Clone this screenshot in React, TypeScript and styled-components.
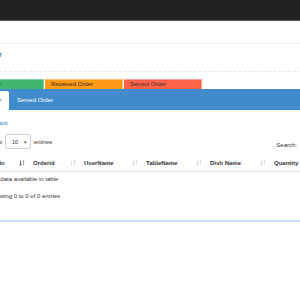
import React from "react";
import styled, { createGlobalStyle } from "styled-components";

const GlobalStyle = createGlobalStyle`
  html, body {
    margin: 0;
    padding: 0;
    background: #fff;
    overflow: hidden;
  }
  body {
    font-family: "Liberation Sans", Arial, sans-serif;
    font-size: 6px;
    color: #333;
  }
`;

type StatusType = "new" | "received" | "served";

const statusColors: Record<StatusType, { bg: string; border: string }> = {
  new: { bg: "#3fb56f", border: "#7fd0a0" },
  received: { bg: "#fd9a17", border: "#ffc06c" },
  served: { bg: "#fe6349", border: "#ffa595" },
};

const columns = [
  { title: "S.No", width: 42, active: true },
  { title: "Orderid", width: 51 },
  { title: "UserName", width: 62 },
  { title: "TableName", width: 64 },
  { title: "Dish Name", width: 64 },
  { title: "Quantity", width: 60 },
];

function SortIcon({ active }: { active?: boolean }) {
  const up = active ? "#999" : "#d6d6d6";
  const down = active ? "#555" : "#d6d6d6";
  return (
    <svg width="6" height="6" viewBox="0 0 6 6">
      <path d="M1.5 0.5 V5.5 M0.5 4.3 L1.5 5.5 L2.5 4.3" stroke={down} strokeWidth="0.8" fill="none" />
      <path d="M4.5 5.5 V0.5 M3.5 1.7 L4.5 0.5 L5.5 1.7" stroke={up} strokeWidth="0.8" fill="none" />
    </svg>
  );
}

export default function App() {
  return (
    <>
      <GlobalStyle />
      <TopBar />
      <HeaderBand />
      <Root>
        <PageTitle>View Order</PageTitle>
        <StatusRow>
          <StatusPill status="new">New Order</StatusPill>
          <StatusPill status="received">Received Order</StatusPill>
          <StatusPill status="served">Served Order</StatusPill>
        </StatusRow>
        <TabBar>
          <Tab active>New Order</Tab>
          <Tab>Served Order</Tab>
        </TabBar>
        <TabContent>
          <BackLink href="#">Go Back</BackLink>
          <ControlsRow>
            <LengthControl>
              Show
              <SelectBox>
                <span>10</span>
                <Caret>▾</Caret>
              </SelectBox>
              entries
            </LengthControl>
            <SearchControl>
              Search:
              <SearchInput />
            </SearchControl>
          </ControlsRow>
          <Table>
            <colgroup>
              {columns.map((c) => (
                <col key={c.title} style={{ width: c.width }} />
              ))}
            </colgroup>
            <thead>
              <tr>
                {columns.map((c) => (
                  <HeadCell key={c.title}>
                    <HeadInner>
                      {c.title}
                      <SortIcon active={c.active} />
                    </HeadInner>
                  </HeadCell>
                ))}
              </tr>
            </thead>
            <tbody>
              <tr>
                <EmptyCell colSpan={columns.length}>No data available in table</EmptyCell>
              </tr>
            </tbody>
          </Table>
          <Info>Showing 0 to 0 of 0 entries</Info>
        </TabContent>
      </Root>
    </>
  );
}

const TopBar = styled.div`
  height: 20px;
  background: #222;
  border-bottom: 1px solid #5a5a5a;
`;

const HeaderBand = styled.div`
  height: 22px;
  border-bottom: 1px solid #eeeeee;
`;

const Root = styled.div`
  margin-left: -34px;
  width: 400px;
`;

const PageTitle = styled.h1`
  margin: 0 0 0 -2px;
  height: 28px;
  padding-top: 6px;
  box-sizing: border-box;
  font-size: 7.6px;
  line-height: 10px;
  font-weight: normal;
  color: #333;
  border-bottom: 1px dashed #e6e6e6;
`;

const StatusRow = styled.div`
  display: flex;
  margin-top: 7px;
  height: 10px;
`;

const StatusPill = styled.div<{ status: StatusType }>`
  box-sizing: border-box;
  width: 78px;
  height: 10px;
  padding-left: 6px;
  line-height: 9px;
  font-size: 6px;
  color: #3a2a1a;
  background: ${(p) => statusColors[p.status].bg};
  border-top: 1px solid ${(p) => statusColors[p.status].border};
  border-right: 1px solid ${(p) => statusColors[p.status].border};
  & + & {
    margin-left: 1px;
  }
`;

const TabBar = styled.div`
  display: flex;
  gap: 1px;
  height: 21px;
  padding-top: 2px;
  box-sizing: border-box;
  background: #428bca;
`;

const Tab = styled.div<{ active?: boolean }>`
  padding: 0 7px;
  line-height: 19px;
  font-size: 6px;
  color: ${(p) => (p.active ? "#428bca" : "#fff")};
  background: ${(p) => (p.active ? "#fff" : "transparent")};
  border-radius: 2px 2px 0 0;
`;

const TabContent = styled.div`
  padding-left: 21px;
  padding-top: 8px;
  height: 112px;
  box-sizing: border-box;
  border-bottom: 2px solid #c6dcf0;
`;

const BackLink = styled.a`
  display: block;
  height: 10px;
  margin-left: -2px;
  line-height: 10px;
  color: #428bca;
  text-decoration: none;
  font-size: 6px;
`;

const ControlsRow = styled.div`
  display: flex;
  justify-content: space-between;
  align-items: flex-start;
  margin-top: 6px;
  width: 363px;
`;

const LengthControl = styled.label`
  display: flex;
  align-items: center;
  gap: 3px;
  height: 15px;
`;

const SelectBox = styled.div`
  box-sizing: border-box;
  width: 26px;
  height: 15px;
  border: 1px solid #d0d0d0;
  border-radius: 2px;
  display: flex;
  align-items: center;
  justify-content: space-between;
  padding: 0 3px 0 6px;
  font-size: 5.5px;
`;

const Caret = styled.span`
  font-size: 5px;
  color: #555;
`;

const SearchControl = styled.label`
  display: flex;
  align-items: center;
  gap: 3px;
  height: 15px;
  margin-top: 3px;
`;

const SearchInput = styled.div`
  width: 50px;
  height: 15px;
  box-sizing: border-box;
  border: 1px solid #d0d0d0;
  border-radius: 2px;
`;

const Table = styled.table`
  margin-top: 3px;
  table-layout: fixed;
  border-collapse: collapse;
  width: 343px;
`;

const HeadCell = styled.th`
  height: 16px;
  padding: 0 4px;
  box-sizing: border-box;
  text-align: left;
  font-weight: bold;
  font-size: 6px;
  border-bottom: 1px solid #e4e4e4;
`;

const HeadInner = styled.div`
  display: flex;
  justify-content: space-between;
  align-items: center;
`;

const EmptyCell = styled.td`
  height: 15px;
  padding: 0 4px;
  font-size: 6px;
`;

const Info = styled.div`
  margin-top: 4px;
  padding-left: 2px;
  line-height: 10px;
  font-size: 6px;
`;
